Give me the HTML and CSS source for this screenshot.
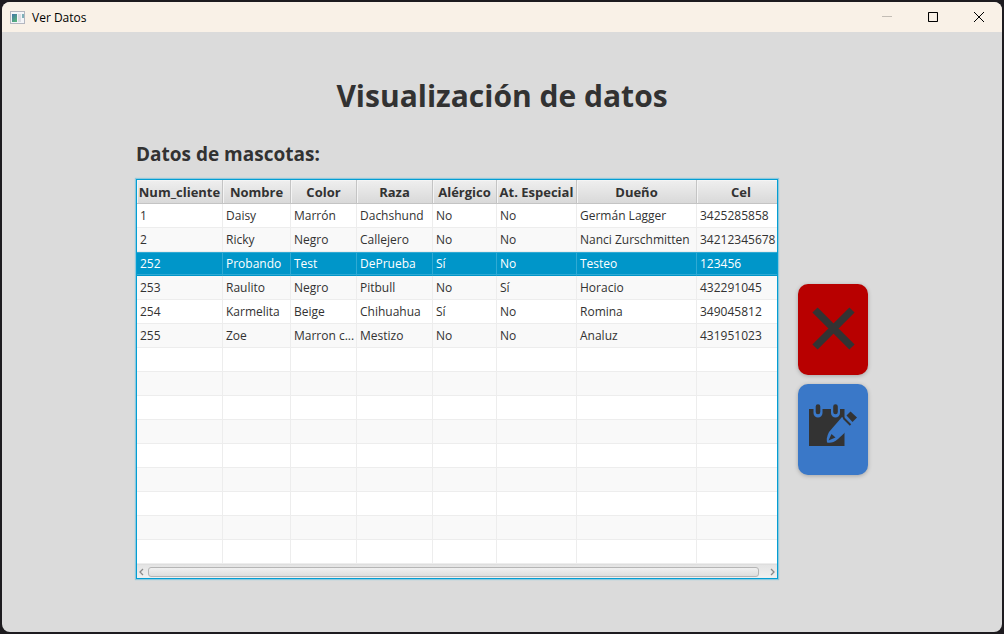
FILE: index.html
```html
<!DOCTYPE html>
<html lang="es">
<head>
<meta charset="utf-8">
<title>Ver Datos</title>
<link rel="stylesheet" href="styles.css">
</head>
<body>
<div class="window">
  <header class="titlebar">
    <svg class="app-icon" width="15" height="13" viewBox="0 0 15 13" aria-hidden="true">
      <defs><linearGradient id="pane" x1="0" y1="0" x2="0.6" y2="1"><stop offset="0" stop-color="#3f74a8"/><stop offset="1" stop-color="#58b07c"/></linearGradient></defs>
      <rect x="0.5" y="0.5" width="14" height="12" fill="#f4f5f8" stroke="#b4b7c0"/>
      <rect x="2" y="3" width="5" height="8" fill="url(#pane)"/>
      <rect x="8" y="3" width="3" height="8" fill="#dcdde3"/>
      <rect x="12" y="3" width="2" height="4" fill="#7fb0b8"/>
    </svg>
    <span class="caption">Ver Datos</span>
    <div class="window-controls">
      <button class="control" type="button" aria-label="Minimizar" disabled><svg width="10" height="10" viewBox="0 0 10 10"><path d="M0 4.5H10" stroke="#c3bdb5" fill="none"/></svg></button>
      <button class="control" type="button" aria-label="Maximizar"><svg width="10" height="10" viewBox="0 0 10 10"><rect x="0.5" y="0.5" width="9" height="9" rx="0.6" stroke="#000" stroke-width="1.100" fill="none"/></svg></button>
      <button class="control" type="button" aria-label="Cerrar"><svg width="10" height="10" viewBox="0 0 10 10"><path d="M0 0L10 10M10 0L0 10" stroke="#000" fill="none"/></svg></button>
    </div>
  </header>
  <main class="content">
    <h1 class="title">Visualización de datos</h1>
    <div class="panel">
      <h2 class="subtitle" id="pets-label">Datos de mascotas:</h2>
      <div class="grid-box">
        <table class="grid" aria-labelledby="pets-label">
          <colgroup><col class="c-num"><col class="c-name"><col class="c-color"><col class="c-breed"><col class="c-allergy"><col class="c-care"><col class="c-owner"><col class="c-phone"></colgroup>
          <thead><tr><th>Num_cliente</th><th>Nombre</th><th>Color</th><th>Raza</th><th>Alérgico</th><th>At. Especial</th><th>Dueño</th><th>Cel</th></tr></thead>
          <tbody>
            <tr><td>1</td><td>Daisy</td><td>Marrón</td><td>Dachshund</td><td>No</td><td>No</td><td>Germán Lagger</td><td>3425285858</td></tr>
            <tr><td>2</td><td>Ricky</td><td>Negro</td><td>Callejero</td><td>No</td><td>No</td><td>Nanci Zurschmitten</td><td>34212345678</td></tr>
            <tr class="selected" aria-selected="true"><td>252</td><td>Probando</td><td>Test</td><td>DePrueba</td><td>Sí</td><td>No</td><td>Testeo</td><td>123456</td></tr>
            <tr><td>253</td><td>Raulito</td><td>Negro</td><td>Pitbull</td><td>No</td><td>Sí</td><td>Horacio</td><td>432291045</td></tr>
            <tr><td>254</td><td>Karmelita</td><td>Beige</td><td>Chihuahua</td><td>Sí</td><td>No</td><td>Romina</td><td>349045812</td></tr>
            <tr><td>255</td><td>Zoe</td><td>Marron c...</td><td>Mestizo</td><td>No</td><td>No</td><td>Analuz</td><td>431951023</td></tr>
            <tr><td></td><td></td><td></td><td></td><td></td><td></td><td></td><td></td></tr>
            <tr><td></td><td></td><td></td><td></td><td></td><td></td><td></td><td></td></tr>
            <tr><td></td><td></td><td></td><td></td><td></td><td></td><td></td><td></td></tr>
            <tr><td></td><td></td><td></td><td></td><td></td><td></td><td></td><td></td></tr>
            <tr><td></td><td></td><td></td><td></td><td></td><td></td><td></td><td></td></tr>
            <tr><td></td><td></td><td></td><td></td><td></td><td></td><td></td><td></td></tr>
            <tr><td></td><td></td><td></td><td></td><td></td><td></td><td></td><td></td></tr>
            <tr><td></td><td></td><td></td><td></td><td></td><td></td><td></td><td></td></tr>
            <tr><td></td><td></td><td></td><td></td><td></td><td></td><td></td><td></td></tr>
          </tbody>
        </table>
        <div class="scrollbar">
          <button class="arrow" type="button" aria-label="Desplazar a la izquierda"><svg width="5" height="8" viewBox="0 0 5 8"><path d="M4 1L1 4L4 7" stroke="#8a8a8a" stroke-width="1.3" fill="none"/></svg></button>
          <div class="track"><div class="thumb"></div></div>
          <button class="arrow" type="button" aria-label="Desplazar a la derecha"><svg width="5" height="8" viewBox="0 0 5 8"><path d="M1 1L4 4L1 7" stroke="#8a8a8a" stroke-width="1.3" fill="none"/></svg></button>
        </div>
      </div>
      <div class="actions">
        <button class="action delete" type="button" aria-label="Eliminar">
          <svg width="70" height="91" viewBox="0 0 70 91"><path d="M17 26L54 63M54 26L17 63" stroke="#333" stroke-width="7.400" fill="none"/></svg>
        </button>
        <button class="action edit" type="button" aria-label="Editar">
          <svg width="70" height="91" viewBox="0 0 70 91">
            <path d="M11 25H46.500V62H11Z" fill="#333"/>
            <path d="M20 22V29M37.500 22V29" stroke="#3a78c8" stroke-width="9" stroke-linecap="round" fill="none"/>
            <path d="M11 17H50V25H11Z" fill="#3a78c8"/>
            <path d="M20 22.500V28M37.500 22.500V28" stroke="#333" stroke-width="4.600" stroke-linecap="round" fill="none"/>
            <path d="M44 33L54 42L40 55Q34 60 29 58.500Q28 54 31 48Z" fill="#3a78c8"/>
            <path d="M30.500 56.500L33.500 50L37.500 53.500Z" fill="#333"/>
            <path d="M45.500 34L52.500 41" stroke="#333" stroke-width="2"/>
            <path d="M52.500 27.500L59 33.500L54.500 38L48.500 31.500Z" fill="#333"/>
          </svg>
        </button>
      </div>
    </div>
  </main>
</div>
</body>
</html>
```

FILE: styles.css
```css
* {
  box-sizing: border-box;
}

body {
  margin: 0;
  min-height: 100vh;
  padding: 2px;
  display: flex;
  background: #1d1b1f;
  color: #323232;
  font-family: "Open Sans", "Noto Sans", sans-serif;
  font-size: 12px;
}

button {
  padding: 0;
  border: 0;
  background: none;
}

svg {
  display: block;
}

.window {
  flex: 1;
  display: flex;
  flex-direction: column;
  border-radius: 8px;
  overflow: hidden;
  background: #dbdbdb;
}

.titlebar {
  height: 30px;
  padding-left: 8px;
  display: flex;
  align-items: center;
  gap: 7px;
  background: #f9f1e7;
  color: #000;
}

.caption {
  font-size: 12px;
}

.window-controls {
  margin-left: auto;
  display: flex;
}

.control {
  width: 46px;
  height: 30px;
  display: grid;
  place-items: center;
}

.content {
  flex: 1;
  padding-top: 42px;
}

.title {
  margin: 0 0 22px;
  font-size: 30px;
  line-height: 44px;
  font-weight: 700;
  text-align: center;
}

.panel {
  display: grid;
  grid-template-columns: auto auto;
  justify-content: center;
  align-items: center;
  column-gap: 20px;
}

.subtitle {
  grid-column: 1 / -1;
  margin: 0 0 11px;
  font-size: 19px;
  line-height: 28px;
  font-weight: 700;
}

.grid-box {
  border: 1px solid #039ed3;
  box-shadow: 0 0 1px 1px #8fc8dc;
  background: #fff;
}

.grid {
  table-layout: fixed;
  width: 640px;
  border-collapse: separate;
  border-spacing: 0;
}

.c-num { width: 86px; }
.c-name { width: 68px; }
.c-color { width: 66px; }
.c-breed { width: 76px; }
.c-allergy { width: 64px; }
.c-care,
.c-phone { width: 80px; }
.c-owner { width: 120px; }

.grid th,
.grid td {
  height: 24px;
  line-height: 22px;
  white-space: nowrap;
}

.grid th {
  padding: 0;
  border-right: 1px solid #c4c4c4;
  border-bottom: 1px solid #c4c4c4;
  background: linear-gradient(#efefef, #d9d9d9);
  box-shadow: inset 1px 1px #f4f4f4;
  font-size: 13px;
  font-weight: 700;
  text-align: center;
}

.grid td {
  padding: 0 0 0 3px;
  border-right: 1px solid #ededed;
  border-bottom: 1px solid #ededed;
}

.grid th:last-child,
.grid td:last-child {
  border-right: 0;
}

.grid th:last-child {
  padding-left: 8px;
}

.grid tbody tr:nth-child(even) {
  background: #f9f9f9;
}

.grid tbody .selected {
  background: #0096c9;
  color: #fff;
}

.grid .selected td {
  border-right-color: #30aad4;
  border-bottom-color: #0096c9;
  box-shadow: inset 0 1px #30aad4, inset 0 -1px #30aad4;
}

.scrollbar {
  height: 14px;
  padding: 1px 2px 0;
  display: flex;
  align-items: center;
  gap: 4px;
  border-top: 1px solid #dedede;
  background: linear-gradient(#e4e4e4, #f0f0f0);
}

.track {
  flex: 1;
  padding-right: 7px;
}

.thumb {
  height: 10px;
  border: 1px solid #b5b5b5;
  border-radius: 3px;
  background: linear-gradient(#f0f0f0, #dedede);
}

.actions {
  display: grid;
  gap: 9px;
}

.action {
  width: 70px;
  height: 91px;
  border-radius: 10px;
  box-shadow: 0 1px 4px rgba(0, 0, 0, 0.25);
}

.delete {
  background: #b80000;
}

.edit {
  background: #3a78c8;
}
```
